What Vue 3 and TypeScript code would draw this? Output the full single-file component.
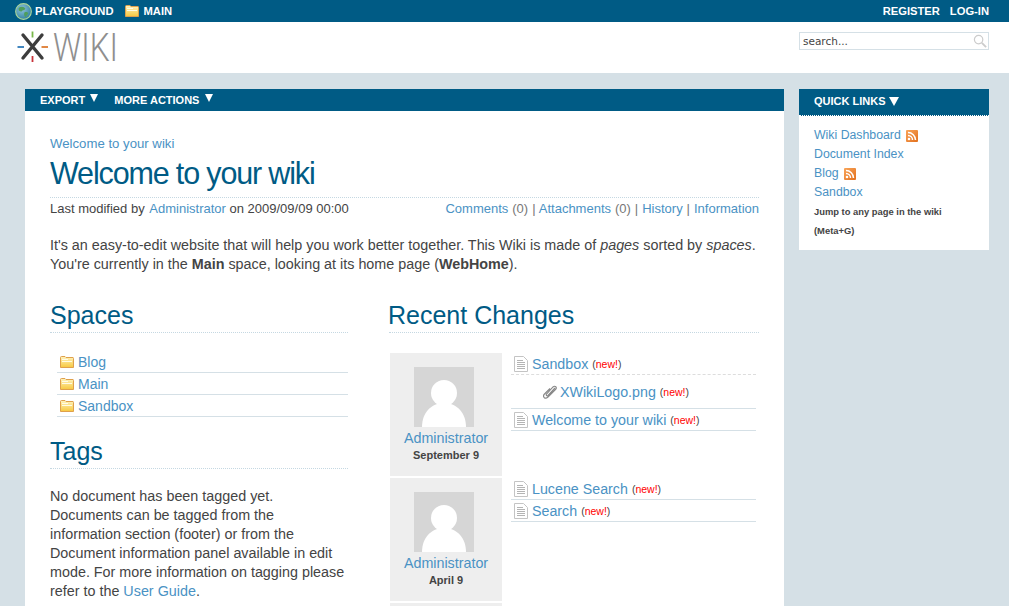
<script setup lang="ts">
const spaces: string[] = ['Blog', 'Main', 'Sandbox']
</script>

<template>
  <div class="page">
    <svg width="0" height="0" class="defs">
      <defs>
        <linearGradient id="fold" x1="0" y1="0" x2="0" y2="1">
          <stop offset="0" stop-color="#fff4c0" />
          <stop offset="1" stop-color="#f7c83f" />
        </linearGradient>
        <linearGradient id="rss" x1="0" y1="0" x2="1" y2="1">
          <stop offset="0" stop-color="#f9a55a" />
          <stop offset="1" stop-color="#e2701d" />
        </linearGradient>
        <radialGradient id="earth" cx=".4" cy=".35" r=".7">
          <stop offset="0" stop-color="#8ec4dc" />
          <stop offset="1" stop-color="#2f7f9c" />
        </radialGradient>
        <symbol id="folder" viewBox="0 0 14 12">
          <path d="M.500 11.500V1.500q0-1 1-1h3.500l1 1h7q.5 0 .5 1v9z" fill="url(#fold)" stroke="#dfa04c" />
          <path d="M2 3.500h6M2 5.500h10" stroke="#fffbe6" />
        </symbol>
        <symbol id="doc" viewBox="0 0 14 16">
          <path d="M.500.500h9l4 4v11H.500z" fill="#fff" stroke="#c4c4c4" />
          <path d="M3 4.500h6M3 6.500h8M3 8.500h8M3 10.500h8M3 12.500h8" stroke="#b4b4b4" />
        </symbol>
        <symbol id="feed" viewBox="0 0 12 12">
          <rect width="12" height="12" rx="1" fill="url(#rss)" />
          <circle cx="3" cy="9" r="1.300" fill="#fff" />
          <path d="M2 5.500a4.500 4.500 0 0 1 4.500 4.500M2 2.500a7.500 7.500 0 0 1 7.500 7.500" fill="none" stroke="#fff" stroke-width="1.500" />
        </symbol>
        <symbol id="avatar" viewBox="0 0 60 60">
          <rect width="60" height="60" fill="#d6d6d6" />
          <circle cx="30" cy="26" r="13" fill="#fff" />
          <path d="M8 60c0-14 9-24 22-24s22 10 22 24z" fill="#fff" />
        </symbol>
      </defs>
    </svg>

    <div class="topbar">
      <div class="crumbs">
        <svg class="globe" width="17" height="17" viewBox="0 0 18 18">
          <circle cx="9" cy="9" r="8.300" fill="url(#earth)" stroke="#a9d59a" stroke-width="1.200" />
          <path d="M4 5c3-2 6-1 7 1-1 2-3 1-4 3-2 0-4-1-3-4zM10 10c2-1 4 0 4 1l-3 4c-1-1-2-3-1-5z" fill="#4f9e5c" />
        </svg>
        <a>PLAYGROUND</a>
        <svg class="topfolder" width="14" height="12"><use href="#folder" /></svg>
        <a>MAIN</a>
      </div>
      <div class="auth"><a>REGISTER</a><a>LOG-IN</a></div>
    </div>

    <header class="header">
      <div class="logo">
        <svg width="32" height="32" viewBox="0 0 32 32">
          <path d="M6 4 25 27M25 4 6 27" stroke="#3d3d3d" stroke-width="3.400" stroke-linecap="round" />
          <path d="M15.500 .500v6" stroke="#79b84a" stroke-width="1.800" />
          <path d="M15.500 25v6" stroke="#c8333a" stroke-width="1.800" />
          <path d="M.500 16h6.500" stroke="#2d79b8" stroke-width="1.800" />
          <path d="M24.500 16h6.500" stroke="#de7b30" stroke-width="1.800" />
        </svg>
        <span class="wordmark">WIKI</span>
      </div>
      <div class="search">
        <span>search...</span>
        <svg width="14" height="14" viewBox="0 0 15 15">
          <circle cx="6" cy="6" r="4.500" fill="none" stroke="#ccc" stroke-width="1.300" />
          <path d="M9.500 9.500 14 14" stroke="#ccc" stroke-width="2" />
        </svg>
      </div>
    </header>

    <div class="columns">
      <main class="main">
        <nav class="toolbar">
          <a>EXPORT <i class="tri"></i></a>
          <a>MORE ACTIONS <i class="tri"></i></a>
        </nav>
        <div class="content">
          <a class="breadcrumb">Welcome to your wiki</a>
          <h1>Welcome to your wiki</h1>
          <div class="meta">
            <span>Last modified by <a class="author">Administrator</a> on 2009/09/09 00:00</span>
            <span class="links"><a>Comments</a> (0) | <a>Attachments</a> (0) | <a>History</a> | <a>Information</a></span>
          </div>
          <p class="intro">
            It's an easy-to-edit website that will help you work better together. This Wiki is made of <em>pages</em> sorted by <em>spaces</em>.<br />
            You're currently in the <strong>Main</strong> space, looking at its home page (<strong>WebHome</strong>).
          </p>
          <div class="twocol">
            <section class="left">
              <h2>Spaces</h2>
              <ul class="spaces">
                <li v-for="s in spaces" :key="s">
                  <svg width="14" height="12"><use href="#folder" /></svg><a>{{ s }}</a>
                </li>
              </ul>
              <h2 class="tags">Tags</h2>
              <p class="tagtext">
                No document has been tagged yet. Documents can be tagged from the information section (footer) or from the Document information panel available in edit mode. For more information on tagging please refer to the <a>User Guide</a>.
              </p>
            </section>
            <section class="right">
              <h2>Recent Changes</h2>
              <div class="changes">
                <div class="group">
                  <div class="user">
                    <svg width="60" height="60"><use href="#avatar" /></svg>
                    <a>Administrator</a>
                    <b>September 9</b>
                  </div>
                  <div class="items">
                    <div class="item dashed">
                      <svg width="14" height="16"><use href="#doc" /></svg><a>Sandbox</a> <small>(<s>new!</s>)</small>
                    </div>
                    <div class="item attach">
                      <svg width="14" height="14" viewBox="0 0 14 14">
                        <path d="M12 3 5 10.500c-1 1-2.500-.5-1.500-1.500L10 2c2-2 4.500.5 2.500 2.500L5 12c-3 3-6-.5-3.500-3L7 3.500" fill="none" stroke="#888" stroke-width="1.100" />
                      </svg>
                      <a>XWikiLogo.png</a> <small>(<s>new!</s>)</small>
                    </div>
                    <div class="item">
                      <svg width="14" height="16"><use href="#doc" /></svg><a>Welcome to your wiki</a> <small>(<s>new!</s>)</small>
                    </div>
                  </div>
                </div>
                <div class="group">
                  <div class="user">
                    <svg width="60" height="60"><use href="#avatar" /></svg>
                    <a>Administrator</a>
                    <b>April 9</b>
                  </div>
                  <div class="items">
                    <div class="item">
                      <svg width="14" height="16"><use href="#doc" /></svg><a>Lucene Search</a> <small>(<s>new!</s>)</small>
                    </div>
                    <div class="item">
                      <svg width="14" height="16"><use href="#doc" /></svg><a>Search</a> <small>(<s>new!</s>)</small>
                    </div>
                  </div>
                </div>
                <div class="group"><div class="user"></div></div>
              </div>
            </section>
          </div>
        </div>
      </main>

      <aside class="side">
        <div class="sidehead">QUICK LINKS <i class="tri big"></i></div>
        <div class="sidebody">
          <div class="row"><a>Wiki Dashboard</a><svg width="12" height="12"><use href="#feed" /></svg></div>
          <div class="row"><a>Document Index</a></div>
          <div class="row"><a>Blog</a><svg width="12" height="12"><use href="#feed" /></svg></div>
          <div class="row"><a>Sandbox</a></div>
          <div class="jump">Jump to any page in the wiki<br />(Meta+G)</div>
        </div>
      </aside>
    </div>
  </div>
</template>

<style>
html, body { margin: 0; height: 606px; overflow: hidden; background: #d5e0e6; }
</style>

<style scoped>
.page { font-family: "Liberation Sans", Arial, sans-serif; color: #444; font-size: 13px; height: 606px; overflow: hidden; }
.defs { position: absolute; }
a { color: #4a92c4; }
.topbar { height: 22px; background: #005b85; display: flex; justify-content: space-between; align-items: center; padding: 0 20px 0 15px; color: #fff; font-size: 11.200px; font-weight: bold; }
.topbar a { color: #fff; }
.crumbs { display: flex; align-items: center; }
.globe { margin-right: 3px; }
.topfolder { margin: 0 5px 0 11px; }
.auth { display: flex; gap: 10px; }
.header { height: 51px; background: #fff; display: flex; justify-content: space-between; align-items: flex-start; padding: 0 20px 0 17px; }
.logo { display: flex; align-items: flex-start; margin-top: 9px; }
.wordmark { font-family: Roboto, "Liberation Sans", sans-serif; font-weight: 300; font-size: 38px; line-height: 34px; color: #8f8f8f; margin-left: 4px; display: inline-block; transform: scaleX(.83); transform-origin: left center; }
.search { margin-top: 10px; width: 190px; height: 18px; box-sizing: border-box; border: 1px solid #d5e0e6; display: flex; justify-content: space-between; align-items: center; padding: 0 1px 0 3px; font-size: 10.500px; font-family: "DejaVu Sans", sans-serif; color: #444; }
.columns { display: flex; padding: 16px 20px 0 25px; gap: 15px; align-items: flex-start; }
.main { width: 759px; background: #fff; min-height: 600px; flex: none; }
.toolbar { height: 22px; background: #005b85; display: flex; align-items: center; padding-left: 15px; gap: 16px; font-size: 11px; font-weight: bold; }
.toolbar a { color: #fff; }
.tri { display: inline-block; width: 0; height: 0; border-left: 4px solid transparent; border-right: 4px solid transparent; border-top: 8px solid #fff; margin-left: 2px; vertical-align: 2px; }
.tri.big { border-left-width: 5px; border-right-width: 5px; border-top-width: 9px; margin-left: 0; vertical-align: -1px; }
.content { padding: 25px 25px 0; }
.breadcrumb { display: block; font-size: 13.200px; line-height: 15px; }
h1 { margin: 4px 0 0; font-weight: normal; font-size: 30.500px; line-height: 36px; color: #005b85; letter-spacing: -1.150px; }
.meta { margin-top: 6px; padding-top: 3px; border-top: 1px dotted #c5d8e2; display: flex; justify-content: space-between; font-size: 13px; line-height: 16px; }
.author { margin-left: 1px; }
.links { color: #777; word-spacing: .35px; }
.intro { margin: 19px 0 0; font-size: 14.350px; line-height: 19px; }
.twocol { display: flex; justify-content: space-between; margin-top: 24px; }
.left { width: 298px; }
.right { width: 370px; }
.right h2 { text-indent: -1px; }
h2 { margin: 0; font-weight: normal; font-size: 25px; line-height: 34px; color: #005b85; border-bottom: 1px dotted #c5d8e2; }
.spaces { list-style: none; margin: 18px 0 0 7px; padding: 0; font-size: 14px; }
.spaces li { height: 21px; border-bottom: 1px solid #d5e0e6; padding-left: 3px; display: flex; align-items: center; gap: 4px; }
.tags { margin-top: 17px; }
.tagtext { margin: 18px 0 0; font-size: 14.350px; line-height: 19px; max-width: 296px; }
.changes { margin-top: 20px; padding-left: 1px; display: flex; flex-direction: column; gap: 2px; }
.group { display: flex; gap: 9px; }
.user { width: 112px; height: 123px; background: #eee; display: flex; flex-direction: column; align-items: center; padding-top: 14px; box-sizing: border-box; flex: none; font-size: 14.300px; }
.user svg { margin: 0 4px 3px 0; }
.user b { font-size: 11px; line-height: 16px; margin-top: 1px; color: #444; }
.items { width: 245px; font-size: 14.250px; }
.item { display: flex; align-items: center; height: 21px; border-bottom: 1px solid #d5e0e6; padding-left: 3px; }
.item > svg { margin-right: 4px; }
.item small { font-size: 10.500px; margin-left: 4px; }
.item s { color: #f00; text-decoration: none; }
.dashed { border-bottom: 1px dashed #ddd; }
.attach { height: 33px; padding-left: 32px; }
.attach > svg { margin-right: 3px; }
.side { width: 190px; flex: none; }
.sidehead { height: 27px; background: #005b85; border-bottom: 1px dotted #fff; box-sizing: border-box; color: #fff; font-size: 11px; font-weight: bold; padding: 6px 15px; }
.sidebody { background: #fff; padding: 9px 15px 0; height: 134px; box-sizing: border-box; font-size: 12.300px; }
.row { height: 19px; display: flex; align-items: center; gap: 5px; }
.row svg { margin-top: 3px; }
.jump { font-size: 9.400px; font-weight: bold; line-height: 19px; color: #444; margin-top: 1px; }
</style>
